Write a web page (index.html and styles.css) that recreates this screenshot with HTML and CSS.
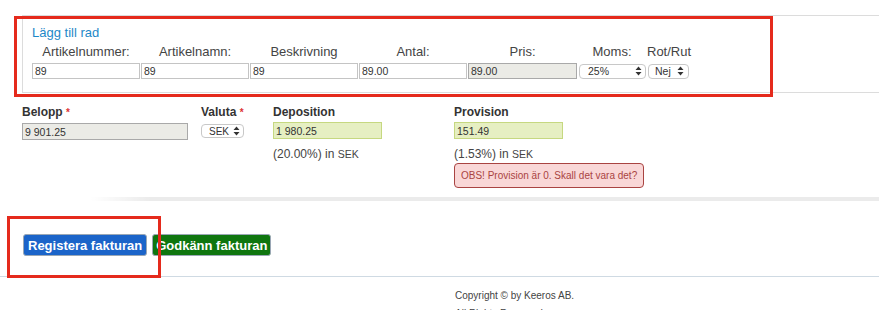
FILE: index.html
```html
<!DOCTYPE html>
<html lang="sv">

<head>
  <title>Faktura</title>
  <meta charset="utf-8">
  <meta name="viewport" content="width=device-width, initial-scale=1">
  <link rel="stylesheet" href="styles.css">
</head>

<body>

  <!-- Rader -->
  <div class="rowcard">
    <a class="addrow" href="#">Lägg till rad</a>
    <div class="rowgrid">
      <span class="colhead">Artikelnummer:</span>
      <span class="colhead">Artikelnamn:</span>
      <span class="colhead">Beskrivning</span>
      <span class="colhead">Antal:</span>
      <span class="colhead">Pris:</span>
      <span class="colhead">Moms:</span>
      <span class="colhead">Rot/Rut</span>

      <input class="field" type="text" value="89">
      <input class="field" type="text" value="89">
      <input class="field" type="text" value="89">
      <input class="field" type="text" value="89.00">
      <input class="field readonly" type="text" value="89.00" readonly>
      <div class="fakeselect moms">25%
        <svg class="arrows" width="7" height="10" viewBox="0 0 7 10"><path d="M3.5 0.5L6.5 4H0.5Z M3.5 9.5L6.5 6H0.5Z" fill="#333"/></svg>
      </div>
      <div class="fakeselect rot">Nej
        <svg class="arrows" width="7" height="10" viewBox="0 0 7 10"><path d="M3.5 0.5L6.5 4H0.5Z M3.5 9.5L6.5 6H0.5Z" fill="#333"/></svg>
      </div>
    </div>
  </div>

  <!-- Belopp -->
  <div class="amounts">
    <div class="group belopp">
      <label class="lbl">Belopp <span class="req">*</span></label>
      <input class="field readonly wide" type="text" value="9 901.25" readonly>
    </div>
    <div class="group valuta">
      <label class="lbl">Valuta <span class="req">*</span></label>
      <div class="fakeselect sek">SEK
        <svg class="arrows" width="7" height="10" viewBox="0 0 7 10"><path d="M3.5 0.5L6.5 4H0.5Z M3.5 9.5L6.5 6H0.5Z" fill="#333"/></svg>
      </div>
    </div>
    <div class="group deposition">
      <label class="lbl">Deposition</label>
      <input class="field green" type="text" value="1 980.25">
      <p class="note">(20.00%) in <span class="cur">SEK</span></p>
    </div>
    <div class="group provision">
      <label class="lbl">Provision</label>
      <input class="field green" type="text" value="151.49">
      <p class="note">(1.53%) in <span class="cur">SEK</span></p>
      <div class="alert">OBS! Provision är 0. Skall det vara det?</div>
    </div>
  </div>
  <div class="shadowline"></div>

  <div class="buttons">
    <button class="btn btn-blue">Registera fakturan</button>
    <button class="btn btn-green">Godkänn fakturan</button>
  </div>

  <footer>
    <p>Copyright © by Keeros AB.</p>
    <p>All Rights Reserved.</p>
  </footer>

  <!-- markeringar -->
  <div class="mark mark-rows"></div>
  <div class="mark mark-btn"></div>

</body>

</html>
```

FILE: styles.css
```css
* {
  box-sizing: border-box;
}

body {
  margin: 0;
  padding-top: 15px;
  font-family: "Liberation Sans", Arial, Helvetica, sans-serif;
  color: #333;
  background-color: white;
  position: relative;
  height: 310px;
  overflow: hidden;
}

/* Row card */
.rowcard {
  margin-left: 22px;
  border: 1px solid #dcdcdc;
  border-right: none;
  padding: 9px 0 13px 9px;
  height: 78px;
}

.addrow {
  display: block;
  color: #1d88c8;
  text-decoration: none;
  font-size: 13px;
  line-height: 16px;
}

.rowgrid {
  display: grid;
  grid-template-columns: 108px 108px 108px 108px 109px 68px 42px;
  column-gap: 1px;
  row-gap: 3px;
  margin-top: 3px;
  align-items: center;
}

.colhead {
  text-align: center;
  font-size: 13px;
  line-height: 16px;
  color: #444;
}

.field {
  height: 16px;
  border: 1px solid #c4c4c4;
  padding: 0 2px;
  font-family: "Liberation Sans", Arial, sans-serif;
  font-size: 10.5px;
  color: #333;
  background-color: white;
  width: 100%;
  outline: none;
}

.readonly {
  background-color: #ebebe6;
  border-color: #a9a9a9;
}

.fakeselect {
  display: flex;
  align-items: center;
  justify-content: space-between;
  height: 15px;
  border: 1px solid #c8c8c8;
  border-radius: 4px;
  font-size: 10.5px;
  color: #333;
  background-color: white;
}

.moms {
  margin-left: 1px;
  padding: 0 3px 0 8px;
}

.rot {
  margin-left: 1px;
  padding: 0 4px 0 6px;
}

/* Amounts */
.amounts {
  display: flex;
  margin-top: 12px;
  padding-left: 22px;
  height: 92px;
}

.group {
  display: flex;
  flex-direction: column;
  align-items: flex-start;
}

.belopp {
  width: 179px;
}

.valuta {
  width: 72px;
}

.deposition {
  width: 181px;
}

.lbl {
  font-size: 12px;
  font-weight: bold;
  line-height: 14px;
  margin-bottom: 3px;
}

.req {
  color: #d33;
  font-size: 10px;
}

.wide {
  width: 166px;
  height: 17px;
}

.green {
  width: 109px;
  height: 17px;
  background-color: #e6efc2;
  border-color: #c6d880;
}

.sek {
  width: 43px;
  margin-top: 1px;
  padding: 0 3px 0 7px;
  height: 14px;
  font-size: 10px;
}

.note {
  margin: 8px 0 0 0;
  font-size: 12px;
  line-height: 14px;
  color: #444;
}

.cur {
  font-size: 10.5px;
}

.alert {
  margin-top: 2px;
  padding: 6px 6px 5px 6px;
  border: 1px solid #a94442;
  border-radius: 4px;
  background-color: #f9d7d7;
  color: #a94442;
  font-size: 10px;
  line-height: 12px;
}

.shadowline {
  height: 4px;
  margin-left: 90px;
  background: linear-gradient(to right, rgba(0, 0, 0, 0), rgba(0, 0, 0, 0.08) 60px);
  border-radius: 0 0 0 60px;
}

/* Buttons */
.buttons {
  display: flex;
  gap: 5px;
  padding: 33px 0 0 23px;
  height: 76px;
  border-bottom: 1px solid #cfdae3;
}

.btn {
  height: 22px;
  padding: 0 4px;
  border: 1px solid #9aa7b5;
  border-radius: 3px;
  color: white;
  font-family: "Liberation Sans", Arial, sans-serif;
  font-size: 13px;
  font-weight: bold;
}

.btn-blue {
  background-color: #1b64c9;
}

.btn-green {
  background-color: #0f760f;
  padding: 0 3px;
}

footer {
  padding: 13px 0 0 455px;
}

footer p {
  margin: 0 0 6px 0;
  font-size: 10px;
  line-height: 12px;
  color: #444;
}

/* Red markings lying over the page */
.mark {
  position: absolute;
  border: 3px solid #e52a1c;
}

.mark-rows {
  left: 14px;
  top: 16px;
  width: 759px;
  height: 81px;
}

.mark-btn {
  left: 7px;
  top: 216px;
  width: 154px;
  height: 62px;
}
```
